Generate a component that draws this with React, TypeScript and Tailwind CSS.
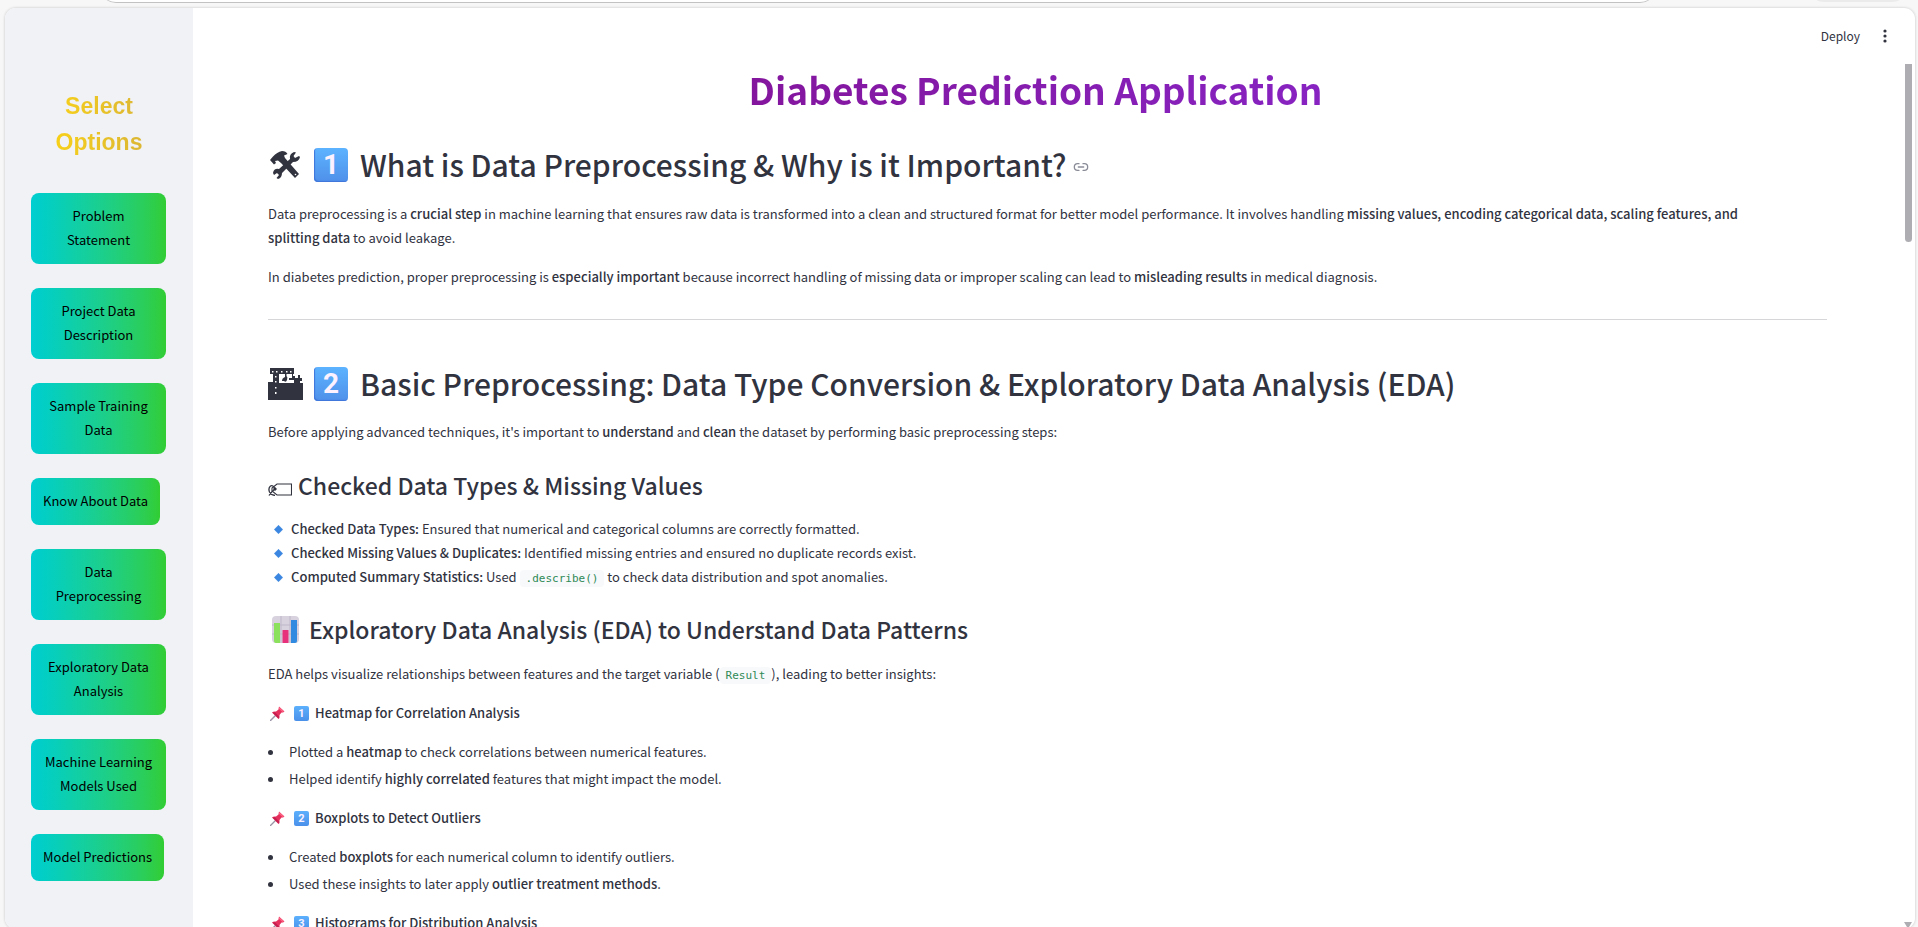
import type { ReactNode } from 'react';
import { Link2 } from 'lucide-react';

const MENU = [
  'Problem Statement',
  'Project Data Description',
  'Sample Training Data',
  'Know About Data',
  'Data Preprocessing',
  'Exploratory Data Analysis',
  'Machine Learning Models Used',
  'Model Predictions',
];

function Keycap({ digit, small = false }: { digit: string; small?: boolean }) {
  return small ? (
    <span className="flex size-[15px] shrink-0 items-center justify-center rounded-[2px] bg-linear-to-b from-[#5cb0fc] to-[#4a90ea] font-['Roboto'] text-[11px] leading-none font-bold text-[#fbf1ff]">
      {digit}
    </span>
  ) : (
    <span className="flex size-[34px] shrink-0 items-center justify-center rounded-[4px] bg-linear-to-b from-[#5cb3ff] to-[#4f90ea] font-['Roboto'] text-[28px] leading-none font-bold text-[#fbf1ff] shadow-[inset_1px_-1px_1px_#3f75da]">
      {digit}
    </span>
  );
}

function ToolsIcon() {
  return (
    <svg viewBox="0 0 30 28" className="h-7 w-[30px] shrink-0" fill="#31333f" aria-hidden="true">
      <path d="M0 9 L3 5.500 Q7 1 12 0 Q16 0 17.500 3 L14 4.500 L15 7 L29 23 L25 27 L11 12 L8 9.500 L5 10 L6 12 L4 13.500 Z" />
      <path d="M20 8 Q19 3 24 1 L26 1.500 L23.500 5 L25 7 L29 5 L30 6 Q29 11 23 11 L12 22 Q12 27 8 28 L6.500 27 L9 24 L7 22 L4 24 L3 22 Q4 17 9 18 Z" />
      <circle cx="25.500" cy="23.500" r="0.800" fill="#fff" />
    </svg>
  );
}

function CraneIcon() {
  return (
    <svg viewBox="0 0 35 32" className="h-8 w-[35px] shrink-0" fill="#31333f" aria-hidden="true">
      <path d="M0 14 H5 V6 H2 V0 H26 V6 H25 V8 H27 V10 H30 V7 H32 V10 H34 V13 H32 V15 H35 V32 H0 Z" />
      <path d="M11 6 H17 V9 Q14 10 14 13 H16 Q18 15 19 12 Q20 9 18.500 8 V6 H24 V10 H21 V12 H26 V15 H11 Z" fill="#fff" />
      <path d="M22 10 H34 V11 H22 Z" />
      <g fill="#fff">
        <path d="M4 3h1.500v1.500H4zM8 3h1.500v1.500H8zM13 3h1.500v1.500H13zM18 3h1.500v1.500H18zM22 3h1.500v1.500H22z" />
        <path d="M7 8h1.500v1.500H7zM7 13h1.500v1.500H7zM7 19h1.500v1.500H7zM7 24h1.500v2H7z" />
      </g>
    </svg>
  );
}

function TagIcon() {
  return (
    <svg viewBox="0 0 24 13" className="h-[13px] w-6 shrink-0" fill="none" stroke="#31333f" aria-hidden="true">
      <path d="M9 1 H23.500 V12 H9 L4 8 V5 Z" strokeWidth="1.100" />
      <path d="M7 6 Q5 1.500 2.500 3 Q0 5 1.500 9 Q3 12 7 12.500 M1 12.500 Q4 8 7 6" strokeWidth="1.300" />
      <circle cx="7" cy="6" r="1.200" fill="#31333f" />
    </svg>
  );
}

function ChartIcon() {
  return (
    <svg viewBox="0 0 27 27" className="size-[27px] shrink-0" aria-hidden="true">
      <rect width="27" height="27" rx="4" fill="#d8d2df" />
      <path d="M9 0V27M18 0V27M0 9H27M0 18H27" stroke="#beb7c8" />
      <path d="M2 7H8V27H4Q2 27 2 25Z" fill="#8be05c" />
      <rect x="10.500" y="14" width="6" height="13" rx="0.500" fill="#e8317c" />
      <path d="M19 4H25V25Q25 27 23 27H19Z" fill="#2f8ae0" />
    </svg>
  );
}

function PinIcon() {
  return (
    <svg viewBox="0 0 15 15" className="size-[15px] shrink-0" aria-hidden="true">
      <path d="M6 9 L0.500 14.500" stroke="#9b93a5" strokeWidth="1.400" strokeLinecap="round" />
      <path d="M9 0.500 L14.500 5.500 L13 6.500 L11.500 6.500 L9.500 9 Q10 12 8.500 13 L2 6.500 Q3.500 5 6 5.500 L8.500 3.500 Z" fill="#e5305e" />
      <path d="M9 1 L14 5.500 L12.500 6 L8.800 2.800 Z" fill="#ff6584" />
      <path d="M2.500 6.500 L8.500 12.500 L9 10.500 L5 6.200 Z" fill="#c21f50" />
    </svg>
  );
}

function Diamond() {
  return (
    <svg viewBox="0 0 9 9" className="size-[9px] shrink-0" aria-hidden="true">
      <path d="M4.500 0.300 L8.700 4.500 L4.500 8.700 L0.300 4.500 Z" fill="#3b86e0" stroke="#3b86e0" strokeWidth="0.600" strokeLinejoin="round" />
    </svg>
  );
}

function Code({ children }: { children: ReactNode }) {
  return (
    <code className="rounded-[4px] bg-[#f8f9fb] px-[6px] py-[2px] font-['DejaVu_Sans_Mono',monospace] text-[11px] leading-4 text-[#2f8a57]">
      {children}
    </code>
  );
}

function B({ children }: { children: ReactNode }) {
  return <strong className="font-medium">{children}</strong>;
}

function Fact({ children }: { children: ReactNode }) {
  return (
    <li className="flex items-center gap-2 pl-[6px]">
      <Diamond />
      <span>{children}</span>
    </li>
  );
}

function Step({ digit, title, items }: { digit: string; title: string; items: ReactNode[] }) {
  return (
    <section className="mt-[15px]">
      <h4 className="flex items-center pl-[2px] font-medium">
        <PinIcon />
        <span className="mr-[6px] ml-[9px]">
          <Keycap digit={digit} small />
        </span>
        {title}
      </h4>
      <ul className="mt-[15px] flex flex-col gap-[3px]">
        {items.map((item, i) => (
          <li key={i} className="flex items-center">
            <span className="mr-4 size-[5px] rounded-full bg-[#31333f]" />
            <span>{item}</span>
          </li>
        ))}
      </ul>
    </section>
  );
}

export default function App() {
  return (
    <div className="flex h-screen flex-col overflow-hidden bg-[#f7f7f7] font-['Noto_Sans_CJK_SC',sans-serif] text-[13px] leading-6 text-[#31333f]">
      <div className="flex h-2 shrink-0 items-start justify-between pr-[10px] pl-[100px]">
        <div className="-mt-6 mr-[152px] h-[27px] flex-1 rounded-b-[16px] border-b border-[#c2c2c2] bg-white" />
        <div className="-mt-6 h-[26px] w-[100px] rounded-b-[16px] bg-[#ebebeb]" />
      </div>
      <div className="mr-[3px] ml-[5px] flex h-[calc(100vh-6px)] shrink-0 overflow-hidden rounded-[11px] bg-white shadow-[0_0_2px_1px_#dedede]">
        <aside className="w-[188px] shrink-0 bg-[#f0f2f6] px-[26px] pt-[80px]">
          <h2 className="bg-linear-to-r from-[#ffd700] to-[#d4af37] bg-clip-text text-center font-['Liberation_Sans',sans-serif] text-[23px] leading-9 font-bold text-transparent">
            Select Options
          </h2>
          <nav className="mt-[33px] flex flex-col items-start gap-6 pr-px">
            {MENU.map((label) => (
              <button
                key={label}
                type="button"
                className="rounded-lg bg-linear-to-r from-[#00ced1] to-[#32cd32] px-3 pt-[11px] pb-3 text-center text-black"
              >
                {label}
              </button>
            ))}
          </nav>
        </aside>
        <div className="flex min-w-0 flex-1 flex-col">
          <header className="flex h-[54px] shrink-0 items-center justify-end gap-[23px] pt-[2px] pr-[28px]">
            <button type="button" className="pb-px text-[12px]">Deploy</button>
            <button type="button" aria-label="Main menu">
              <svg viewBox="0 0 4 14" className="h-[14px] w-1" fill="#31333f">
                <circle cx="2" cy="2" r="1.600" />
                <circle cx="2" cy="7" r="1.600" />
                <circle cx="2" cy="12" r="1.600" />
              </svg>
            </button>
          </header>
          <div className="flex min-h-0 flex-1">
            <main className="min-w-0 flex-1 overflow-hidden px-[75px]">
              <h1 className="bg-linear-to-r from-[#800080] to-[#8a2be2] bg-clip-text pr-6 text-center text-[37px] leading-[54px] font-bold text-transparent">
                Diabetes Prediction Application
              </h1>

              <h2 className="mt-7 flex items-center pl-[2px] text-[30px] leading-[41px] font-medium">
                <ToolsIcon />
                <span className="mr-3 ml-[14px]">
                  <Keycap digit="1" />
                </span>
                What is Data Preprocessing &amp; Why is it Important?
                <a href="#preprocessing" aria-label="Link to this section" className="mt-1 ml-[6px]">
                  <Link2 className="size-4 text-[#8a8c98]" />
                </a>
              </h2>
              <p className="mt-[17px]">
                Data preprocessing is a <B>crucial step</B> in machine learning that ensures raw data is transformed into a
                clean and structured format for better model performance. It involves handling{' '}
                <B>
                  missing values, encoding categorical data, scaling features, and
                  <br />
                  splitting data
                </B>{' '}
                to avoid leakage.
              </p>
              <p className="mt-[15px]">
                In diabetes prediction, proper preprocessing is <B>especially important</B> because incorrect handling of
                missing data or improper scaling can lead to <B>misleading results</B> in medical diagnosis.
              </p>

              <hr className="mt-[30px] border-[#d6d6d9]" />

              <h2 className="mt-[43px] flex items-center text-[30px] leading-[41px] font-medium">
                <CraneIcon />
                <span className="mr-3 ml-[11px]">
                  <Keycap digit="2" />
                </span>
                Basic Preprocessing: Data Type Conversion &amp; Exploratory Data Analysis (EDA)
              </h2>
              <p className="mt-4">
                Before applying advanced techniques, it's important to <B>understand</B> and <B>clean</B> the dataset by
                performing basic preprocessing steps:
              </p>

              <h3 className="mt-[25px] flex items-center gap-[6px] text-[23px] leading-8 font-medium">
                <span className="pt-2">
                  <TagIcon />
                </span>
                Checked Data Types &amp; Missing Values
              </h3>
              <ul className="mt-4">
                <Fact>
                  <B>Checked Data Types:</B> Ensured that numerical and categorical columns are correctly formatted.
                </Fact>
                <Fact>
                  <B>Checked Missing Values &amp; Duplicates:</B> Identified missing entries and ensured no duplicate
                  records exist.
                </Fact>
                <Fact>
                  <B>Computed Summary Statistics:</B> Used <Code>.describe()</Code> to check data distribution and spot
                  anomalies.
                </Fact>
              </ul>

              <h3 className="mt-6 flex items-center gap-[10px] pl-1 text-[23px] leading-8 font-medium">
                <ChartIcon />
                Exploratory Data Analysis (EDA) to Understand Data Patterns
              </h3>
              <p className="mt-[17px]">
                EDA helps visualize relationships between features and the target variable (<Code>Result</Code>), leading to
                better insights:
              </p>

              <Step
                digit="1"
                title="Heatmap for Correlation Analysis"
                items={[
                  <>Plotted a <B>heatmap</B> to check correlations between numerical features.</>,
                  <>Helped identify <B>highly correlated</B> features that might impact the model.</>,
                ]}
              />
              <Step
                digit="2"
                title="Boxplots to Detect Outliers"
                items={[
                  <>Created <B>boxplots</B> for each numerical column to identify outliers.</>,
                  <>Used these insights to later apply <B>outlier treatment methods</B>.</>,
                ]}
              />
              <Step digit="3" title="Histograms for Distribution Analysis" items={[]} />
            </main>
            <div className="flex w-[13px] shrink-0 flex-col items-center justify-between py-[2px] pr-px">
              <div className="h-[178px] w-[7px] rounded-b-[4px] bg-[#adadb2]" />
              <svg viewBox="0 0 8 5" className="h-[5px] w-2" fill="#adadb2" aria-hidden="true">
                <path d="M0 0H8L5 5H3Z" />
              </svg>
            </div>
          </div>
        </div>
      </div>
    </div>
  );
}
